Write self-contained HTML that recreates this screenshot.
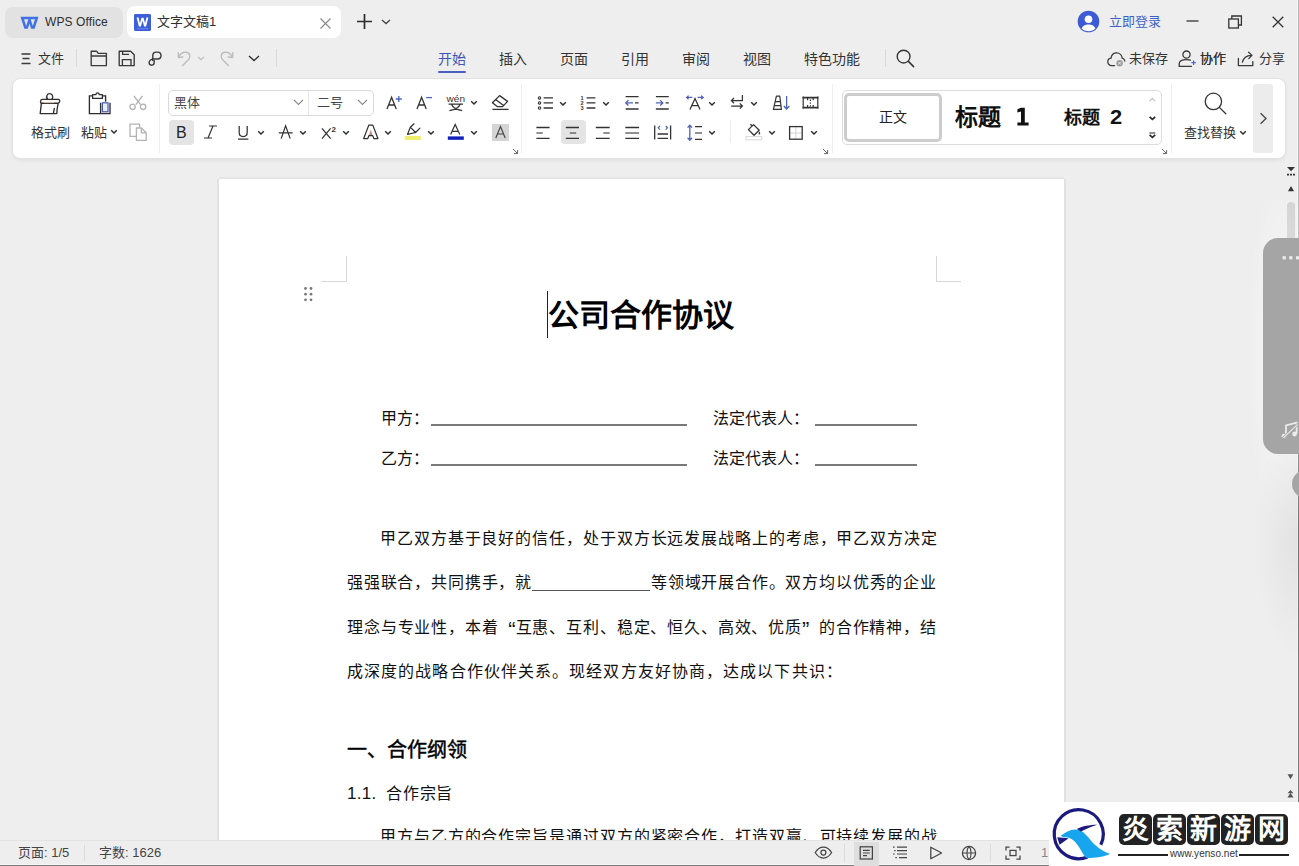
<!DOCTYPE html>
<html lang="zh-CN"><head><meta charset="utf-8">
<style>
*{box-sizing:border-box}
html,body{margin:0;padding:0}
body{width:1299px;height:866px;overflow:hidden;background:#eeeeee;position:relative;font-family:"Liberation Sans",sans-serif;color:#333}
.a{position:absolute}
.t13{font-size:13px;line-height:16px;white-space:nowrap}
.t14{font-size:14px;line-height:18px;white-space:nowrap}
svg{position:absolute;overflow:visible}
.ic{fill:none;stroke:#3b3b3b;stroke-width:1.2;stroke-linecap:round;stroke-linejoin:round}
.page{left:219px;top:179px;width:845px;height:700px;background:#fff;box-shadow:-2px 0 0 #e1e1e1,2px 0 0 #e1e1e1,0 -2px 0 #e4e4e4}
.doc{font-size:16px;line-height:20px;color:#111;white-space:nowrap}
.qL{display:inline-block;width:16px;text-align:right;text-align-last:right;font-size:22px;line-height:16px;vertical-align:-4px;letter-spacing:-1px}.qR{display:inline-block;width:16px;text-align:left;text-align-last:left;font-size:22px;line-height:16px;vertical-align:-4px}
.jl{text-align:justify;text-align-last:justify;width:589px}
</style></head>
<body>
<!-- ===== title bar ===== -->
<div class="a" style="left:5px;top:7px;width:118px;height:31px;border-radius:8px;background:#e2e2e2"></div>
<div class="a" style="left:45px;top:14px;color:#2e2e2e;font-size:12px;line-height:16px;letter-spacing:0.1px;white-space:nowrap">WPS Office</div>
<div class="a" style="left:127px;top:6px;width:214px;height:32px;border-radius:8px;background:#fff"></div>
<div class="a" style="left:134px;top:14px;width:17px;height:17px;border-radius:2px;background:#3f5fd8"></div>
<div class="a t13" style="left:157px;top:14px;color:#2e2e2e">文字文稿1</div>

<div class="a t13" style="left:1109px;top:14px;color:#3f5fc8">立即登录</div>
<!-- title icons -->
<svg style="left:20px;top:16px" width="19" height="14" viewBox="0 0 19 14"><path d="M0.5 0.8 L18.5 0.8 L14.6 12.8 L11.2 12.8 L9.5 7.6 L7.8 12.8 L4.4 12.8 Z" fill="#3f72e6"/><path d="M4 3.2 L6.2 10 L8.4 3.2 Z M10.6 3.2 L12.8 10 L15 3.2 Z" fill="#e2e2e2"/><path d="M5 3.2 L14 3.2 L13.3 5.2 L5.7 5.2Z" fill="#3f72e6" opacity=".0"/></svg>
<svg style="left:134px;top:14px" width="17" height="17" viewBox="0 0 17 17"><rect x="0" y="0" width="17" height="17" rx="2" fill="#3d5ed9"/><rect x="3" y="14.2" width="11" height="1" fill="#6d87e6"/><path d="M2.6 3.6 L4.9 12.6 L6.9 12.6 L8.5 6.8 L10.1 12.6 L12.1 12.6 L14.4 3.6 L12.4 3.6 L11.1 9.3 L9.5 3.8 L7.5 3.8 L5.9 9.3 L4.6 3.6 Z" fill="#fff"/></svg>
<svg style="left:319px;top:17px" width="13" height="13"><path d="M1.5 1.5 L11.5 11.5 M11.5 1.5 L1.5 11.5" stroke="#8a8a8a" stroke-width="1.2" fill="none"/></svg>
<svg style="left:356px;top:13px" width="17" height="17"><path d="M8.5 1 V16 M1 8.5 H16" stroke="#2c2c2c" stroke-width="1.7" fill="none"/></svg>
<svg style="left:381px;top:19px" width="10" height="6"><path d="M1 1 L5 4.6 L9 1" stroke="#444" stroke-width="1.3" fill="none"/></svg>
<svg style="left:1077px;top:10px" width="23" height="23" viewBox="0 0 23 23"><circle cx="11.5" cy="11.5" r="10.8" fill="#3c5bd4"/><circle cx="11.5" cy="9.2" r="3.8" fill="#fff"/><path d="M4.6 18.6 C6 15.2 8.4 14.4 11.5 14.4 C14.6 14.4 17 15.2 18.4 18.6 C16.6 20.4 14.2 21.3 11.5 21.3 C8.8 21.3 6.4 20.4 4.6 18.6Z" fill="#fff"/></svg>
<svg style="left:1186px;top:20px" width="13" height="3"><path d="M0.5 1 H12.5" stroke="#333" stroke-width="1.3"/></svg>
<svg style="left:1228px;top:15px" width="15" height="14"><rect x="0.8" y="4" width="9.6" height="9" fill="none" stroke="#333" stroke-width="1.3"/><path d="M3.8 4 V1 H13.4 V10 H10.4" fill="none" stroke="#333" stroke-width="1.3"/></svg>
<svg style="left:1272px;top:16px" width="12" height="12"><path d="M0.7 0.7 L11.3 11.3 M11.3 0.7 L0.7 11.3" stroke="#333" stroke-width="1.3" fill="none"/></svg>

<!-- ===== row 2 ===== -->
<div class="a t13" style="left:38px;top:51px;color:#333">文件</div>
<div class="a t14" style="left:438px;top:50px;color:#3f56b8">开始</div>
<div class="a" style="left:438px;top:71px;width:28px;height:2px;background:#4a5fc0;border-radius:1px"></div>
<div class="a t14" style="left:499px;top:50px">插入</div>
<div class="a t14" style="left:560px;top:50px">页面</div>
<div class="a t14" style="left:621px;top:50px">引用</div>
<div class="a t14" style="left:682px;top:50px">审阅</div>
<div class="a t14" style="left:743px;top:50px">视图</div>
<div class="a t14" style="left:804px;top:50px">特色功能</div>
<!-- row2 icons -->
<svg style="left:21px;top:53px" width="10" height="12"><path d="M0.5 1 H9.5 M1.5 5.5 H8.5 M0.5 10.5 H9.5" stroke="#3a3a3a" stroke-width="1.3" fill="none"/></svg>
<div class="a" style="left:76px;top:49px;width:1px;height:18px;background:#dadada"></div>
<svg style="left:90px;top:50px" width="18" height="17" viewBox="0 0 18 17"><path d="M1.2 1.2 H6.6 L8.2 3.4 H16.4 V15.6 H1.2 Z M1.2 6 H16.4" fill="none" stroke="#3a3a3a" stroke-width="1.35" stroke-linejoin="round"/></svg>
<svg style="left:118px;top:50px" width="18" height="17" viewBox="0 0 18 17"><path d="M1.2 1.2 H12.6 L16.2 4.8 V15.6 H1.2 Z" fill="none" stroke="#3a3a3a" stroke-width="1.35" stroke-linejoin="round"/><path d="M4.4 15.6 V9.6 H13 V15.6 M4.6 1.2 V4.4 H11" fill="none" stroke="#3a3a3a" stroke-width="1.35"/></svg>
<svg style="left:148px;top:51px" width="15" height="16" viewBox="0 0 15 16"><path d="M4.8 9.6 V4.4 C4.8 2.4 6.2 1.1 8.2 1.1 H9.6 C11.6 1.1 13 2.6 13 4.5 C13 6.5 11.6 8 9.6 8 H6.2 C3.2 8 1.1 9.6 1.1 11.6 C1.1 13.2 2.3 14.2 3.6 14.2 C5 14.2 6.2 13.2 6.2 11.6 V9.8" fill="none" stroke="#3a3a3a" stroke-width="1.4" stroke-linecap="round"/></svg>
<svg style="left:177px;top:51px" width="15" height="16" viewBox="0 0 15 16"><path d="M1.4 6.4 C3 2.6 5.6 1.2 8.4 1.2 C11 1.2 12.8 3 12.8 5.4 C12.8 7 12 8.2 10.6 9.6 L5.6 14.4 M1.2 1.8 L1.4 6.6 L5.8 6" fill="none" stroke="#bdbdbd" stroke-width="1.4" stroke-linecap="round" stroke-linejoin="round"/></svg>
<svg style="left:197px;top:56px" width="8" height="5"><path d="M1 1 L4 3.8 L7 1" stroke="#c0c0c0" stroke-width="1.2" fill="none"/></svg>
<svg style="left:219px;top:51px" width="15" height="16" viewBox="0 0 15 16"><path d="M13.6 6.4 C12 2.6 9.4 1.2 6.6 1.2 C4 1.2 2.2 3 2.2 5.4 C2.2 7 3 8.2 4.4 9.6 L9.4 14.4 M13.8 1.8 L13.6 6.6 L9.2 6" fill="none" stroke="#bdbdbd" stroke-width="1.4" stroke-linecap="round" stroke-linejoin="round"/></svg>
<svg style="left:248px;top:55px" width="12" height="7"><path d="M1 1 L6 5.6 L11 1" stroke="#333" stroke-width="1.4" fill="none"/></svg>
<div class="a" style="left:276px;top:49px;width:1px;height:18px;background:#dadada"></div>
<div class="a" style="left:885px;top:49px;width:1px;height:18px;background:#dadada"></div>
<svg style="left:896px;top:49px" width="19" height="19" viewBox="0 0 19 19"><circle cx="7.6" cy="7.6" r="6.4" fill="none" stroke="#333" stroke-width="1.4"/><path d="M12.4 12.4 L17.6 17.6" stroke="#333" stroke-width="1.5" stroke-linecap="round"/></svg>
<svg style="left:1107px;top:52px" width="20" height="16" viewBox="0 0 20 16"><path d="M7.6 13.6 H4.6 C2.4 13.6 0.8 12 0.8 9.8 C0.8 7.8 2.2 6.4 4 6.2 C4.4 3.2 6.6 0.8 9.6 0.8 C12.6 0.8 15 3.2 15.2 6.2 C16.6 6.6 17.6 7.6 17.8 9" fill="none" stroke="#3a3a3a" stroke-width="1.3" stroke-linecap="round"/><circle cx="12.6" cy="11.2" r="4" fill="#eeeeee"/><circle cx="12.6" cy="11.2" r="3.2" fill="#9a9a9a"/><path d="M11.3 9.9 L13.9 12.5 M13.9 9.9 L11.3 12.5" stroke="#eee" stroke-width="1"/></svg>
<div class="a t13" style="left:1129px;top:51px">未保存</div>
<svg style="left:1178px;top:50px" width="19" height="18" viewBox="0 0 19 18"><circle cx="8.5" cy="4.6" r="3.6" fill="none" stroke="#3a3a3a" stroke-width="1.3"/><path d="M1.2 16.4 V13.8 C1.2 11.2 4 9.6 8.5 9.6 C10 9.6 11.4 9.8 12.4 10.2 M1.2 16.4 H13.4" fill="none" stroke="#3a3a3a" stroke-width="1.3" stroke-linecap="round"/><path d="M15.6 10.4 V15 M13.3 12.7 H17.9" stroke="#4a6ad0" stroke-width="1.3"/></svg>
<div class="a t13" style="left:1200px;top:51px">协作</div>
<svg style="left:1237px;top:51px" width="18" height="16" viewBox="0 0 18 16"><path d="M1.4 7.4 V14.6 H15.8 V10.6" fill="none" stroke="#3a3a3a" stroke-width="1.3" stroke-linecap="round" stroke-linejoin="round"/><path d="M5.4 11.2 C6.4 6.8 9.6 4.6 14.4 4.4 M11.6 1.2 L15 4.4 L11.8 7.6" fill="none" stroke="#3a3a3a" stroke-width="1.3" stroke-linecap="round" stroke-linejoin="round"/></svg>
<div class="a t13" style="left:1200px;top:51px">协作</div>
<div class="a t13" style="left:1259px;top:51px">分享</div>

<!-- ===== ribbon card ===== -->
<div class="a" style="left:13px;top:79px;width:1272px;height:79px;border-radius:7px;background:#fff;box-shadow:0 0 0 1px #e2e2e2,0 2px 4px rgba(0,0,0,.08)"></div>

<!-- ribbon: clipboard -->
<svg style="left:39px;top:92px" width="22" height="23" viewBox="0 0 22 23"><path d="M8.8 7.2 C7.6 6.6 7.4 4.6 8.2 3 C9 1.2 12.2 1.2 13.2 3 C14 4.6 13.8 6.6 12.6 7.2" fill="none" stroke="#2f2f2f" stroke-width="1.35"/><path d="M3.2 7.4 H19.2 C20.6 7.4 20.8 8.4 20.6 9.6 C20.4 10.8 19.6 11.2 18.8 11.2 H3 C1.6 11.2 1.4 10.2 1.6 9.2 C1.8 8 2.4 7.4 3.2 7.4Z" fill="none" stroke="#2f2f2f" stroke-width="1.35" stroke-linejoin="round"/><path d="M2.4 11.2 L1.2 21.6 H17.8 C17.8 19 18.6 14 19.2 11.2" fill="none" stroke="#2f2f2f" stroke-width="1.35" stroke-linejoin="round"/><path d="M15.4 16.4 L14.4 21" stroke="#2f2f2f" stroke-width="1.35" stroke-linecap="round"/><path d="M5 10.6 H15" stroke="#e8c8a8" stroke-width="1"/></svg>
<div class="a t13" style="left:31px;top:125px;color:#333">格式刷</div>
<svg style="left:88px;top:92px" width="24" height="23" viewBox="0 0 24 23"><path d="M4.6 3.8 H1.4 V21.6 H12" fill="none" stroke="#2f2f2f" stroke-width="1.35"/><path d="M14 3.8 H17.6 V9.8" fill="none" stroke="#2f2f2f" stroke-width="1.35"/><path d="M4.6 2.6 H8 C8 1.2 8.6 0.8 9.6 0.8 C10.6 0.8 11.2 1.2 11.2 2.6 H14.4 V6.4 H4.6 Z" fill="none" stroke="#2f2f2f" stroke-width="1.3" stroke-linejoin="round"/><path d="M12.6 10.8 V21.6 H22 V10.8" fill="none" stroke="#2f2f2f" stroke-width="1.35"/><rect x="14.4" y="10.8" width="5.6" height="9" fill="#e8eefc" stroke="#4656a8" stroke-width="1.2"/></svg>
<div class="a t13" style="left:81px;top:125px;color:#333">粘贴</div>
<svg style="left:110px;top:129px" width="8" height="6"><path d="M1.2 1.2 L4 4 L6.8 1.2" stroke="#2f2f2f" stroke-width="1.5" fill="none"/></svg>
<svg style="left:129px;top:95px" width="18" height="16" viewBox="0 0 18 16"><path d="M5 1 L11.6 9.6 M13.4 1 L6.8 9.6" stroke="#b3b3b3" stroke-width="1.3" fill="none"/><circle cx="3.6" cy="11.8" r="2.7" fill="none" stroke="#b3b3b3" stroke-width="1.3"/><circle cx="14.1" cy="11.8" r="2.7" fill="none" stroke="#b3b3b3" stroke-width="1.3"/></svg>
<svg style="left:129px;top:123px" width="18" height="18" viewBox="0 0 18 18"><path d="M7 13.4 H1 V1.2 H10.6 V4.8" fill="none" stroke="#b3b3b3" stroke-width="1.3"/><path d="M7.4 5 H12.4 L17.2 9.8 V17.4 H7.4 Z M12.4 5 V9.8 H17.2" fill="none" stroke="#b3b3b3" stroke-width="1.3" stroke-linejoin="round"/></svg>
<div class="a" style="left:159px;top:84px;width:1px;height:69px;background:#efefef"></div>

<!-- ribbon: font -->
<div class="a" style="left:168px;top:90px;width:206px;height:26px;border:1px solid #d9d9d9;border-radius:5px"></div>
<div class="a" style="left:308px;top:91px;width:1px;height:24px;background:#e6e6e6"></div>
<div class="a t13" style="left:174px;top:95px;color:#444">黑体</div>
<svg style="left:293px;top:99px" width="11" height="7"><path d="M1 1 L5.5 5.4 L10 1" stroke="#8a8a8a" stroke-width="1.1" fill="none"/></svg>
<div class="a t13" style="left:317px;top:95px;color:#444">二号</div>
<svg style="left:357px;top:99px" width="11" height="7"><path d="M1 1 L5.5 5.4 L10 1" stroke="#8a8a8a" stroke-width="1.1" fill="none"/></svg>

<svg style="left:386px;top:95px" width="18" height="15" viewBox="0 0 18 15"><path d="M1 14 L5.6 2.2 L10.2 14 M2.6 10 H8.6" fill="none" stroke="#333" stroke-width="1.3"/><path d="M12.8 1 V7 M9.8 4 H15.8" stroke="#4a64c4" stroke-width="1.3"/></svg>
<svg style="left:416px;top:95px" width="18" height="15" viewBox="0 0 18 15"><path d="M1 14 L5.6 2.2 L10.2 14 M2.6 10 H8.6" fill="none" stroke="#333" stroke-width="1.3"/><path d="M10.2 2.6 H16" stroke="#4a64c4" stroke-width="1.3"/></svg>
<svg style="left:446px;top:95px" width="20" height="17" viewBox="0 0 20 17"><text x="0.6" y="7.4" font-size="8.6" font-family="Liberation Sans" fill="#333" textLength="18.4" lengthAdjust="spacingAndGlyphs">wén</text><path d="M2.6 9 H17 M5.4 9 C6.6 12.4 10 14.6 16.2 15.6 M14.2 9 C13 12.4 9.6 14.6 3.4 15.6" fill="none" stroke="#333" stroke-width="1.25"/></svg>
<svg style="left:470px;top:100px" width="8" height="6"><path d="M1.2 1.2 L4 4 L6.8 1.2" stroke="#2f2f2f" stroke-width="1.5" fill="none"/></svg>
<svg style="left:491px;top:94px" width="19" height="17" viewBox="0 0 19 17"><path d="M8.6 1.6 L16.6 7.4 L11.6 12.6 H6.2 L1.4 8.8 Z M4.6 5.6 L12.6 11.6" fill="none" stroke="#333" stroke-width="1.3" stroke-linejoin="round"/><path d="M1.4 15.4 H17.6" stroke="#333" stroke-width="1.3"/></svg>

<div class="a" style="left:169px;top:120px;width:25px;height:25px;border-radius:4px;background:#e4e4e4"></div>
<div class="a" style="left:176px;top:123px;font-size:16px;line-height:20px;color:#222">B</div>
<svg style="left:203px;top:125px" width="15" height="14" viewBox="0 0 15 14"><path d="M6 1 H14 M1 13 H9 M10 1 L5 13" fill="none" stroke="#333" stroke-width="1.2"/></svg>
<svg style="left:237px;top:125px" width="13" height="15" viewBox="0 0 13 15"><path d="M2.2 1 V7.6 C2.2 10.2 3.8 11.6 6.2 11.6 C8.6 11.6 10.2 10.2 10.2 7.6 V1 M1 14 H11.4" fill="none" stroke="#333" stroke-width="1.25"/></svg>
<svg style="left:257px;top:130px" width="8" height="6"><path d="M1.2 1.2 L4 4 L6.8 1.2" stroke="#2f2f2f" stroke-width="1.5" fill="none"/></svg>
<svg style="left:278px;top:124px" width="16" height="16" viewBox="0 0 16 16"><path d="M3.2 14.6 L7.6 1.8 L12.2 14.6 M0.8 8.8 H14.6" fill="none" stroke="#333" stroke-width="1.2"/></svg>
<svg style="left:299px;top:130px" width="8" height="6"><path d="M1.2 1.2 L4 4 L6.8 1.2" stroke="#2f2f2f" stroke-width="1.5" fill="none"/></svg>
<svg style="left:321px;top:124px" width="17" height="16" viewBox="0 0 17 16"><path d="M1 4.4 L9.6 14.6 M9.6 4.4 L1 14.6" fill="none" stroke="#333" stroke-width="1.25"/><text x="10.6" y="7.6" font-size="8" font-family="Liberation Sans" font-weight="bold" fill="#333">2</text></svg>
<svg style="left:342px;top:130px" width="8" height="6"><path d="M1.2 1.2 L4 4 L6.8 1.2" stroke="#2f2f2f" stroke-width="1.5" fill="none"/></svg>
<svg style="left:363px;top:124px" width="16" height="16" viewBox="0 0 16 16"><path d="M6 11.2 L7.8 5.6 L9.6 11.2Z" fill="#c98a7c"/><path d="M0.7 14.5 L5.8 1.1 H9.8 L14.9 14.5 H10.8 L9.7 11.6 H5.9 L4.8 14.5 Z" fill="none" stroke="#2f2f2f" stroke-width="1.25" stroke-linejoin="round"/></svg>
<svg style="left:384px;top:130px" width="8" height="6"><path d="M1.2 1.2 L4 4 L6.8 1.2" stroke="#2f2f2f" stroke-width="1.5" fill="none"/></svg>
<svg style="left:404px;top:123px" width="18" height="18" viewBox="0 0 18 18"><path d="M3.5 11.4 L6.3 4.2 L11.6 9.5 Z M6.3 4.2 L10 0.8 M11.6 9.5 L15.9 5.2" fill="none" stroke="#2f2f2f" stroke-width="1.2" stroke-linejoin="round" stroke-linecap="round"/><rect x="0.8" y="12.9" width="16" height="4" fill="#eeee6a"/></svg>
<svg style="left:427px;top:130px" width="8" height="6"><path d="M1.2 1.2 L4 4 L6.8 1.2" stroke="#2f2f2f" stroke-width="1.5" fill="none"/></svg>
<svg style="left:447px;top:123px" width="18" height="18" viewBox="0 0 18 18"><path d="M3.6 11.6 L8.2 1.4 L12.8 11.6 M5 8.4 H11.4" fill="none" stroke="#333" stroke-width="1.2"/><rect x="0.8" y="13.4" width="16" height="3.4" fill="#1020b8"/></svg>
<svg style="left:470px;top:130px" width="8" height="6"><path d="M1.2 1.2 L4 4 L6.8 1.2" stroke="#2f2f2f" stroke-width="1.5" fill="none"/></svg>
<div class="a" style="left:492px;top:124px;width:17px;height:17px;background:#d4d4d4"></div>
<svg style="left:492px;top:124px" width="17" height="17" viewBox="0 0 17 17"><path d="M3.8 14 L8.5 2.6 L13.2 14 M5.4 10 H11.6" fill="none" stroke="#444" stroke-width="1.2"/></svg>
<svg style="left:512px;top:148px" width="7" height="7"><path d="M1 1 L5.6 5.6 M5.6 2 V5.6 H2" fill="none" stroke="#666" stroke-width="1"/></svg>
<div class="a" style="left:521px;top:84px;width:1px;height:69px;background:#efefef"></div>

<!-- ribbon: paragraph -->
<svg style="left:536px;top:95px" width="18" height="15" viewBox="536 95 18 15"><g fill="none" stroke="#333" stroke-width="1.1"><circle cx="539.5" cy="97.9" r="1.2"/><circle cx="539.5" cy="102.9" r="1.2"/><circle cx="539.5" cy="108" r="1.2"/></g><path d="M543.6 97.9 H553 M543.6 102.9 H553 M543.6 108 H553" stroke="#333" stroke-width="1.3"/></svg>
<svg style="left:559px;top:101px" width="8" height="6"><path d="M1.2 1.2 L4 4 L6.8 1.2" stroke="#2f2f2f" stroke-width="1.5" fill="none"/></svg>
<svg style="left:579px;top:95px" width="18" height="15" viewBox="579 95 18 15"><text x="580.4" y="99.8" font-size="5.6" font-weight="bold" font-family="Liberation Sans" fill="#333">1</text><text x="580.4" y="104.8" font-size="5.6" font-weight="bold" font-family="Liberation Sans" fill="#333">2</text><text x="580.4" y="109.8" font-size="5.6" font-weight="bold" font-family="Liberation Sans" fill="#333">3</text><path d="M586.6 97.9 H595.4 M586.6 102.9 H595.4 M586.6 108 H595.4" stroke="#333" stroke-width="1.3"/></svg>
<svg style="left:602px;top:101px" width="8" height="6"><path d="M1.2 1.2 L4 4 L6.8 1.2" stroke="#2f2f2f" stroke-width="1.5" fill="none"/></svg>
<svg style="left:624px;top:95px" width="16" height="16" viewBox="624 95 16 16"><path d="M625.6 96.7 H638.6 M625.6 109 H638.6 M635 102.9 H638.6" stroke="#333" stroke-width="1.3"/><path d="M625.8 102.9 H633 M628.4 100.3 L625.8 102.9 L628.4 105.5" fill="none" stroke="#4f64b4" stroke-width="1.3"/></svg>
<svg style="left:654px;top:95px" width="16" height="16" viewBox="654 95 16 16"><path d="M655.9 96.7 H668.8 M655.9 109 H668.8 M665.6 102.9 H668.8" stroke="#333" stroke-width="1.3"/><path d="M655.9 102.9 H662.8 M660.2 100.3 L662.8 102.9 L660.2 105.5" fill="none" stroke="#4f64b4" stroke-width="1.3"/></svg>
<svg style="left:685px;top:94px" width="20" height="17" viewBox="685 94 20 17"><path d="M690 109.6 L695 98.6 L700 109.6 M691.8 105.6 H698.2" fill="none" stroke="#333" stroke-width="1.25"/><path d="M686.6 97.4 H692.4 M688.6 95.6 L686.6 97.4 L688.6 99.2 M697.6 97.4 H703.2 M701.2 95.6 L703.2 97.4 L701.2 99.2" fill="none" stroke="#4f64b4" stroke-width="1.2"/></svg>
<svg style="left:708px;top:101px" width="8" height="6"><path d="M1.2 1.2 L4 4 L6.8 1.2" stroke="#2f2f2f" stroke-width="1.5" fill="none"/></svg>
<svg style="left:729px;top:94px" width="16" height="17" viewBox="729 94 16 17"><path d="M742.4 95 V100.6 H731.4 M734 98 L731.4 100.6 L734 103.2 M731.2 106 H742.4 M739.8 103.4 L742.4 106 L739.8 108.6" fill="none" stroke="#333" stroke-width="1.25"/></svg>
<svg style="left:750px;top:101px" width="8" height="6"><path d="M1.2 1.2 L4 4 L6.8 1.2" stroke="#2f2f2f" stroke-width="1.5" fill="none"/></svg>
<svg style="left:772px;top:94px" width="19" height="17" viewBox="772 94 19 17"><path d="M773.4 109.4 L776.4 96.2 H779.8 L781.4 109.4 Z M775.2 101.6 H780.2 M774.4 105.6 H780.8" fill="none" stroke="#333" stroke-width="1.2" stroke-linejoin="round"/><path d="M786.6 96 V109 M783.8 106 L786.6 109 L789.4 106" fill="none" stroke="#4f64b4" stroke-width="1.3"/></svg>
<svg style="left:801px;top:95px" width="19" height="15" viewBox="801 95 19 15"><path d="M802.6 97.6 H818.4 M802.6 107.6 H818.4" stroke="#333" stroke-width="1.6"/><path d="M803.2 96.6 V108.6 M817.8 96.6 V108.6 M807.6 97.6 V100.2 M813.2 97.6 V100.2 M807.6 105 V107.6 M813.2 105 V107.6 M810.4 99.6 V101 M810.4 102.4 V103.8 M810.4 105.2 V106.6" stroke="#333" stroke-width="1.2"/></svg>

<svg style="left:535px;top:126px" width="16" height="14" viewBox="535 126 16 14"><path d="M536.4 127.5 H549.6 M536.4 138.4 H549.6" stroke="#333" stroke-width="1.3"/><path d="M536.4 133 H542.8" stroke="#555" stroke-width="1.3"/></svg>
<div class="a" style="left:561px;top:120px;width:25px;height:24px;border-radius:4px;background:#e4e4e4"></div>
<svg style="left:564px;top:126px" width="17" height="14" viewBox="564 126 17 14"><path d="M565.8 127.5 H579 M565.8 138.4 H579" stroke="#333" stroke-width="1.3"/><path d="M569.8 133 H576.2" stroke="#555" stroke-width="1.3"/></svg>
<svg style="left:594px;top:126px" width="17" height="14" viewBox="594 126 17 14"><path d="M595.8 127.5 H609.7 M595.8 138.4 H609.7" stroke="#333" stroke-width="1.3"/><path d="M603.3 133 H609.7" stroke="#555" stroke-width="1.3"/></svg>
<svg style="left:624px;top:126px" width="17" height="14" viewBox="624 126 17 14"><path d="M625.3 127.5 H639.1 M625.3 138.4 H639.1" stroke="#333" stroke-width="1.3"/><path d="M625.3 133 H639.1" stroke="#555" stroke-width="1.3"/></svg>
<svg style="left:653px;top:124px" width="19" height="17" viewBox="653 124 19 17"><path d="M654.7 125.5 V139.4 M670.6 125.5 V139.4 M657.6 134 H668 M657.6 138.4 H668" stroke="#333" stroke-width="1.3"/><path d="M660 126 L658.2 127.8 L660 129.6 M665.6 126 L667.4 127.8 L665.6 129.6" fill="none" stroke="#4f64b4" stroke-width="1.2"/></svg>
<svg style="left:686px;top:124px" width="18" height="18" viewBox="686 124 18 18"><path d="M689.8 125.4 V140 M687.6 127.6 L689.8 125.2 L692 127.6 M687.6 137.8 L689.8 140.2 L692 137.8" fill="none" stroke="#4f64b4" stroke-width="1.3"/><path d="M695 126.7 H702 M695 139.4 H702" stroke="#333" stroke-width="1.3"/><path d="M695 133 H702" stroke="#555" stroke-width="1.3"/></svg>
<svg style="left:708px;top:130px" width="8" height="6"><path d="M1.2 1.2 L4 4 L6.8 1.2" stroke="#2f2f2f" stroke-width="1.5" fill="none"/></svg>
<div class="a" style="left:730px;top:120px;width:1px;height:23px;background:#ececec"></div>
<svg style="left:744px;top:122px" width="20" height="20" viewBox="744 122 20 20"><path d="M748.4 129.6 L753.6 124.6 L759.2 130.2 L754 135.2 Z M750.4 124.2 L752.4 126.2" fill="none" stroke="#333" stroke-width="1.3" stroke-linejoin="round"/><path d="M759.4 131.4 C758.4 133 758.2 134 759.4 134.6 C760.6 134 760.4 133 759.4 131.4Z" fill="#333"/><rect x="746" y="136.6" width="15.8" height="3.2" fill="none" stroke="#d8d8d8" stroke-width="1"/></svg>
<svg style="left:768px;top:130px" width="8" height="6"><path d="M1.2 1.2 L4 4 L6.8 1.2" stroke="#2f2f2f" stroke-width="1.5" fill="none"/></svg>
<svg style="left:788px;top:125px" width="16" height="16" viewBox="788 125 16 16"><path d="M795.8 127 V139 M789.8 133 H802" stroke="#d4d4d4" stroke-width="1"/><rect x="789.6" y="126.6" width="12.6" height="12.6" fill="none" stroke="#333" stroke-width="1.3"/></svg>
<svg style="left:810px;top:130px" width="8" height="6"><path d="M1.2 1.2 L4 4 L6.8 1.2" stroke="#2f2f2f" stroke-width="1.5" fill="none"/></svg>
<svg style="left:822px;top:148px" width="7" height="7"><path d="M1 1 L5.6 5.6 M5.6 2 V5.6 H2" fill="none" stroke="#666" stroke-width="1"/></svg>
<div class="a" style="left:832px;top:84px;width:1px;height:69px;background:#efefef"></div>

<!-- ribbon: styles -->
<div class="a" style="left:842px;top:90px;width:320px;height:55px;border:1px solid #dcdcdc;border-radius:5px"></div>
<div class="a" style="left:844px;top:93px;width:98px;height:49px;border:3.5px solid #cdcdcd;border-radius:5px"></div>
<div class="a t14" style="left:879px;top:108px;color:#222">正文</div>
<div class="a" style="left:955px;top:103px;font-size:23px;line-height:28px;font-weight:bold;color:#111;white-space:nowrap">标题</div><svg style="left:1016px;top:107px" width="14" height="19" viewBox="0 0 14 19"><path d="M5 0.8 H8.8 V15.4 H12.6 V18.4 H1.4 V15.4 H5 V4.4 L1.4 5.4 V2.2 Z" fill="#111"/></svg>
<div class="a" style="left:1064px;top:106px;font-size:18px;line-height:24px;font-weight:bold;color:#111;white-space:nowrap">标题</div><div class="a" style="left:1110px;top:105px;font-size:19.5px;line-height:24px;font-weight:bold;color:#111;white-space:nowrap;transform:scaleX(1.12);transform-origin:0 0">2</div>
<svg style="left:1147px;top:96px" width="10" height="43" viewBox="1147 96 10 43"><path d="M1149.6 101 L1152.4 98.4 L1155.2 101" fill="none" stroke="#c8c8c8" stroke-width="1.3"/><path d="M1149.6 116.8 L1152.4 119.4 L1155.2 116.8" fill="none" stroke="#2a2a2a" stroke-width="1.7"/><path d="M1149.4 133 H1155.4" stroke="#555" stroke-width="1.3"/><path d="M1149.6 134.8 L1152.4 137.4 L1155.2 134.8" fill="none" stroke="#2a2a2a" stroke-width="1.7"/></svg>
<svg style="left:1161px;top:148px" width="7" height="7"><path d="M1 1 L5.6 5.6 M5.6 2 V5.6 H2" fill="none" stroke="#666" stroke-width="1"/></svg>
<div class="a" style="left:1171px;top:84px;width:1px;height:69px;background:#efefef"></div>

<!-- ribbon: find -->
<svg style="left:1203px;top:91px" width="25" height="25" viewBox="1203 91 25 25"><circle cx="1213.4" cy="101.4" r="8.2" fill="none" stroke="#333" stroke-width="1.3"/><path d="M1219.4 107.4 L1225.8 113.8" stroke="#333" stroke-width="1.3" stroke-linecap="round"/></svg>
<div class="a t13" style="left:1184px;top:125px;color:#333">查找替换</div>
<svg style="left:1239px;top:130px" width="8" height="6"><path d="M1.2 1.2 L4 4 L6.8 1.2" stroke="#2f2f2f" stroke-width="1.5" fill="none"/></svg>
<div class="a" style="left:1253px;top:84px;width:20px;height:69px;border-radius:3px;background:#ececec"></div>
<svg style="left:1259px;top:112px" width="9" height="13"><path d="M1.6 1.2 L7 6.5 L1.6 11.8" fill="none" stroke="#444" stroke-width="1.3"/></svg>

<!-- ===== page ===== -->
<div class="a page"></div>
<!-- corner marks -->
<div class="a" style="left:346px;top:256px;width:1px;height:26px;background:#d6d6d6"></div>
<div class="a" style="left:321px;top:281px;width:26px;height:1px;background:#d6d6d6"></div>
<div class="a" style="left:936px;top:256px;width:1px;height:26px;background:#d6d6d6"></div>
<div class="a" style="left:936px;top:281px;width:25px;height:1px;background:#d6d6d6"></div>
<!-- drag handle -->
<svg style="left:304px;top:287px" width="9" height="15"><g fill="#7a7a7a"><circle cx="1.5" cy="1.5" r="1.4"/><circle cx="7" cy="1.5" r="1.4"/><circle cx="1.5" cy="7.2" r="1.4"/><circle cx="7" cy="7.2" r="1.4"/><circle cx="1.5" cy="12.8" r="1.4"/><circle cx="7" cy="12.8" r="1.4"/></g></svg>
<!-- caret -->
<div class="a" style="left:547px;top:291px;width:1px;height:47px;background:#222"></div>
<div class="a doc" style="left:548px;top:297px;font-size:31px;line-height:38px;font-weight:bold;color:#000">公司合作协议</div>

<div class="a doc" style="left:381px;top:409px">甲方：</div>
<div class="a" style="left:431px;top:424px;width:256px;height:2px;background:#7a7a7a"></div>
<div class="a doc" style="left:713px;top:409px">法定代表人：</div>
<div class="a" style="left:815px;top:424px;width:102px;height:2px;background:#7a7a7a"></div>
<div class="a doc" style="left:381px;top:449px">乙方：</div>
<div class="a" style="left:431px;top:464px;width:256px;height:2px;background:#7a7a7a"></div>
<div class="a doc" style="left:713px;top:449px">法定代表人：</div>
<div class="a" style="left:815px;top:464px;width:102px;height:2px;background:#7a7a7a"></div>

<div class="a doc jl" style="left:380px;top:529px;width:557px">甲乙双方基于良好的信任，处于双方长远发展战略上的考虑，甲乙双方决定</div>
<div class="a doc jl" style="left:347px;top:573px">强强联合，共同携手，就<span style="display:inline-block;width:118px;height:16px;border-bottom:1.5px solid #555;vertical-align:-3px"></span>等领域开展合作。双方均以优秀的企业</div>
<div class="a doc jl" style="left:347px;top:618px">理念与专业性，本着<span class="qL">“</span>互惠、互利、稳定、恒久、高效、优质<span class="qR">”</span>的合作精神，结</div>
<div class="a doc" style="left:347px;top:662px;letter-spacing:1.1px">成深度的战略合作伙伴关系。现经双方友好协商，达成以下共识：</div>

<div class="a doc" style="left:347px;top:738px;font-size:20px;line-height:24px;color:#000;-webkit-text-stroke:0.45px #000">一、合作纲领</div>
<div class="a doc" style="left:347px;top:784px;font-size:17px;letter-spacing:0.3px">1.1.</div><div class="a doc" style="left:386px;top:784px;letter-spacing:0.8px">合作宗旨</div>
<div class="a doc jl" style="left:380px;top:827px;width:557px">甲方与乙方的合作宗旨是通过双方的紧密合作，打造双赢、可持续发展的战</div>

<!-- ===== right side ===== -->
<div class="a" style="left:1297px;top:0;width:1px;height:840px;background:#f6f6f6"></div>
<div class="a" style="left:1298px;top:0;width:1px;height:840px;background:#b4b4b4"></div>
<div class="a" style="left:1298px;top:454px;width:1px;height:349px;background:#787878"></div>
<svg style="left:1286px;top:166px" width="10" height="11" viewBox="0 0 10 11"><path d="M1 1 H9 L5 5.2 Z" fill="#333"/><path d="M1 8.6 H3 M4 8.6 H6 M7 8.6 H9" stroke="#333" stroke-width="1.6"/></svg>
<svg style="left:1287px;top:185px" width="8" height="7"><path d="M1 6.2 L4 1 L7 6.2Z" fill="#333"/></svg>
<div class="a" style="left:1287px;top:202px;width:8px;height:60px;border-radius:4px;background:#cfcfcf"></div>
<div class="a" style="left:1225px;top:200px;width:80px;height:380px;background:radial-gradient(ellipse 40px 190px at 60px 150px,rgba(255,255,255,.55),rgba(255,255,255,0))"></div>
<div class="a" style="left:1200px;top:380px;width:99px;height:320px;background:radial-gradient(ellipse 45px 120px at 99px 160px,rgba(0,0,0,.05),rgba(0,0,0,0))"></div>
<div class="a" style="left:1263px;top:238px;width:50px;height:216px;border-radius:15px;background:#a5a5a5"></div>
<svg style="left:1282px;top:255px" width="17" height="6"><rect x="0.6" y="1.2" width="3.2" height="3.2" fill="#ececec"/><rect x="7.2" y="1.2" width="3.2" height="3.2" fill="#ececec"/><rect x="14" y="1.2" width="3.2" height="3.2" fill="#ececec"/></svg>
<svg style="left:1281px;top:421px" width="18" height="19" viewBox="0 0 18 19"><path d="M5 15 V4.4 L15.6 1.6 V12.6" fill="none" stroke="#ececec" stroke-width="1.8"/><circle cx="3" cy="15.2" r="2.4" fill="#ececec"/><circle cx="13.6" cy="13" r="2.4" fill="#ececec"/><path d="M1.6 17.6 L17 3" stroke="#a5a5a5" stroke-width="2.6"/><path d="M2.4 16.8 L16.6 3.4" stroke="#ececec" stroke-width="1.1"/></svg>
<div class="a" style="left:1292px;top:470px;width:28px;height:28px;border-radius:14px;background:#a5a5a5"></div>
<svg style="left:1287px;top:773px" width="8" height="7"><path d="M0.6 1.2 H6.4 L3.5 6.2Z" fill="#555"/></svg>
<svg style="left:1287px;top:789px" width="8" height="10" viewBox="0 0 8 10"><path d="M3.5 1 L6.4 4.2 H0.6Z M3.5 4 L6.6 8.4 H0.4Z" fill="#555"/></svg>

<!-- ===== status bar ===== -->
<div class="a" style="left:0;top:840px;width:1299px;height:26px;background:#eeeeee;border-top:1px solid #e3e3e3"></div>
<div class="a" style="left:0;top:864px;width:1299px;height:1px;background:#f7f7f7"></div>
<div class="a" style="left:0;top:865px;width:1299px;height:1px;background:#7a7a7a"></div>
<div class="a t13" style="left:18px;top:845px;color:#444">页面: 1/5</div>
<div class="a t13" style="left:99px;top:845px;color:#444">字数: 1626</div>
<div class="a" style="left:84px;top:845px;width:1px;height:16px;background:#dcdcdc"></div>
<!-- status icons -->
<svg style="left:814px;top:846px" width="19" height="13" viewBox="0 0 19 13"><path d="M1.2 6.5 C3.4 2.8 6.2 1 9.4 1 C12.6 1 15.4 2.8 17.6 6.5 C15.4 10.2 12.6 12 9.4 12 C6.2 12 3.4 10.2 1.2 6.5Z" fill="none" stroke="#444" stroke-width="1.25"/><circle cx="9.4" cy="6.5" r="2.5" fill="none" stroke="#444" stroke-width="1.25"/></svg>
<div class="a" style="left:844px;top:844px;width:1px;height:18px;background:#dcdcdc"></div>
<div class="a" style="left:854px;top:842px;width:25px;height:24px;background:#dedede"></div>
<svg style="left:859px;top:846px" width="15" height="14" viewBox="0 0 15 14"><rect x="1.2" y="0.8" width="12.2" height="12.2" fill="none" stroke="#444" stroke-width="1.25"/><path d="M4 4.4 H10.8 M4 7 H10.8 M4 9.6 H8" stroke="#444" stroke-width="1.1"/></svg>
<svg style="left:892px;top:846px" width="16" height="14" viewBox="0 0 16 14"><path d="M5 1.2 H15 M5 4.6 H15 M5 8 H15 M7 11.6 H15" stroke="#444" stroke-width="1.2"/><path d="M1 1.2 H2.6 M2.2 4.6 H3.6 M1 8 H2.6 M3.4 11.6 H4.8" stroke="#444" stroke-width="1.2"/></svg>
<svg style="left:929px;top:846px" width="14" height="14" viewBox="0 0 14 14"><path d="M1.8 1.2 L12.6 7 L1.8 12.8 Z" fill="none" stroke="#444" stroke-width="1.25" stroke-linejoin="round"/></svg>
<svg style="left:961px;top:845px" width="16" height="16" viewBox="0 0 16 16"><circle cx="8" cy="8" r="6.6" fill="none" stroke="#444" stroke-width="1.25"/><path d="M1.4 8 H14.6 M8 1.4 C5.2 4.2 5.2 11.8 8 14.6 M8 1.4 C10.8 4.2 10.8 11.8 8 14.6" fill="none" stroke="#444" stroke-width="1.1"/></svg>
<div class="a" style="left:990px;top:844px;width:1px;height:18px;background:#dcdcdc"></div>
<svg style="left:1005px;top:846px" width="16" height="14" viewBox="0 0 16 14"><path d="M1 4.4 V1 H4.6 M11.4 1 H15 V4.4 M15 9.6 V13 H11.4 M4.6 13 H1 V9.6" fill="none" stroke="#444" stroke-width="1.25"/><rect x="5" y="4.4" width="6" height="5.2" fill="none" stroke="#444" stroke-width="1.25"/></svg>
<div class="a t13" style="left:1041px;top:845px;color:#888">1</div>

<!-- ===== watermark ===== -->
<div class="a" style="left:1049px;top:802px;width:250px;height:64px;background:#fff"></div>
<svg style="left:1049px;top:803px" width="70" height="63" viewBox="1049 803 70 63">
<path d="M1100.8 844.8 A24.5 24.5 0 1 0 1087.6 857" fill="none" stroke="#1c1a7e" stroke-width="3.2"/>
<path d="M1060.7 835.7 C1066 832 1070 829.6 1074.8 829.4 C1080 829.2 1084 832 1088 837 C1093 843.4 1098 849 1110.1 854.1 C1104 857 1094 858.6 1085.8 857.7 C1082 853 1080.6 849 1077.6 845 C1074.6 840.6 1071 837.6 1066 837.2 C1064 837 1062 837.2 1060.7 835.7Z" fill="#17a6ee"/>
<path d="M1076.8 829 C1083 826 1089 825 1097.4 824.8 C1091 826.8 1085.6 829 1081 831.6 Z" fill="#1c1a7e"/>
<path d="M1057.2 837.2 L1068.6 838.2 L1059.6 844.8 Z" fill="#1c1a7e"/>
</svg>
<div class="a" style="left:1119px;top:814px;width:33px;height:31px;border-radius:5px;background:#222"></div>
<div class="a" style="left:1153px;top:814px;width:33px;height:31px;border-radius:5px;background:#222"></div>
<div class="a" style="left:1187px;top:814px;width:33px;height:31px;border-radius:5px;background:#222"></div>
<div class="a" style="left:1221px;top:814px;width:33px;height:31px;border-radius:5px;background:#222"></div>
<div class="a" style="left:1255px;top:814px;width:33px;height:31px;border-radius:5px;background:#222"></div>
<div class="a" style="left:1122px;top:815px;font-size:27px;line-height:30px;color:#fff;font-weight:bold;white-space:nowrap;letter-spacing:7px">炎索新游网</div>
<div class="a" style="left:1118px;top:854px;width:50px;height:2px;background:#222"></div>
<div class="a" style="left:1239px;top:854px;width:50px;height:2px;background:#222"></div>
<div class="a" style="left:1170px;top:848px;font-size:10px;line-height:12px;color:#333;white-space:nowrap;letter-spacing:0.05px">www.yenso.net</div>

</body></html>
